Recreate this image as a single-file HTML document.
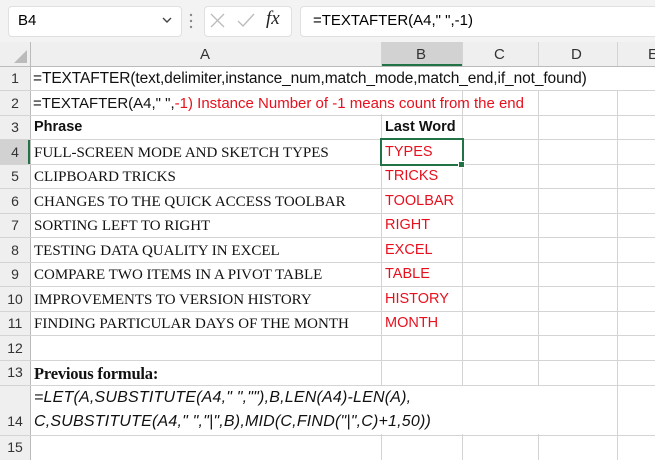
<!DOCTYPE html><html><head><style>
body{margin:0;width:655px;height:460px;overflow:hidden;background:#fff;font-family:"Liberation Sans",sans-serif;position:relative}
.a{position:absolute}
.hl{position:absolute;left:0;width:655px;height:1px;background:#d4d4d4}
.vl{position:absolute;top:42px;height:418px;width:1px;background:#d4d4d4}
.rn{position:absolute;left:0;width:30px;text-align:center;font-size:14px;color:#333;background:#efefef}
.t{position:absolute;left:34px;font-size:14.5px;white-space:nowrap;color:#111}
.s{font-family:"Liberation Serif",serif;font-size:15px;left:34px}
.r{color:#e8101e;left:385px}
</style></head><body>
<div class="a" style="left:0;top:0;width:655px;height:42px;background:#f3f3f3"></div>
<div class="a" style="left:8px;top:6px;width:172px;height:29px;background:#fff;border-radius:4px;border:1px solid #e0e0e0"></div>
<div class="a" style="left:18px;top:12px;font-size:15px">B4</div>
<svg class="a" style="left:161px;top:15px" width="12" height="10"><path d="M2 3L6 7L10 3" stroke="#444" stroke-width="1.4" fill="none"/></svg>
<svg class="a" style="left:188px;top:12px" width="6" height="18"><circle cx="3" cy="3" r="1.2" fill="#888"/><circle cx="3" cy="9" r="1.2" fill="#888"/><circle cx="3" cy="15" r="1.2" fill="#888"/></svg>
<div class="a" style="left:204px;top:6px;width:86px;height:29px;background:#fff;border-radius:4px;border:1px solid #e0e0e0"></div>
<svg class="a" style="left:208px;top:11px" width="52" height="22"><path d="M3 3L16 16M16 3L3 16" stroke="#bbb" stroke-width="1.3" fill="none"/><path d="M30 10L35 15L46 3" stroke="#bbb" stroke-width="1.3" fill="none"/></svg>
<div class="a" style="left:266px;top:8px;font-family:'Liberation Serif',serif;font-style:italic;font-size:19px;color:#222">fx</div>
<div class="a" style="left:300px;top:6px;width:360px;height:29px;background:#fff;border-radius:4px;border:1px solid #e0e0e0"></div>
<div class="a" style="left:313px;top:12px;font-size:15px">=TEXTAFTER(A4," ",-1)</div>
<div class="a" style="left:0;top:42px;width:655px;height:24px;background:#efefef"></div>
<div class="a" style="left:0;top:42px;width:30px;height:418px;background:#efefef"></div>
<svg class="a" style="left:12px;top:48px" width="16" height="16"><path d="M15 2L15 15L2 15Z" fill="#bbb"/></svg>
<div class="a" style="left:381px;top:42px;width:81px;height:24px;background:#d2d2d2;border-bottom:2px solid #217346;box-sizing:border-box"></div>
<div class="a" style="left:0;top:139px;width:30px;height:25px;background:#d2d2d2;border-right:2px solid #217346;box-sizing:border-box"></div>
<div class="a" style="left:200px;top:46px;font-size:15px;color:#333">A</div>
<div class="a" style="left:416px;top:46px;font-size:15px;color:#333">B</div>
<div class="a" style="left:494px;top:46px;font-size:15px;color:#333">C</div>
<div class="a" style="left:571px;top:46px;font-size:15px;color:#333">D</div>
<div class="a" style="left:648px;top:46px;font-size:15px;color:#333">E</div>
<div class="vl" style="left:30px;background:#bbb"></div><div class="vl" style="left:381px"></div><div class="vl" style="left:462px"></div><div class="vl" style="left:538px"></div><div class="vl" style="left:617px"></div>
<div class="hl" style="top:66px;background:#bbb"></div>
<div class="hl" style="top:90px"></div><div class="hl" style="top:115px"></div><div class="hl" style="top:139px"></div><div class="hl" style="top:164px"></div><div class="hl" style="top:188px"></div><div class="hl" style="top:213px"></div><div class="hl" style="top:237px"></div><div class="hl" style="top:262px"></div><div class="hl" style="top:286px"></div><div class="hl" style="top:311px"></div><div class="hl" style="top:335px"></div><div class="hl" style="top:360px"></div><div class="hl" style="top:385px"></div><div class="hl" style="top:435px"></div>
<div class="a" style="left:31px;top:67px;width:624px;height:23px;background:#fff"></div>
<div class="a" style="left:31px;top:91px;width:431px;height:23px;background:#fff"></div>
<div class="a" style="left:31px;top:386px;width:586px;height:48px;background:#fff"></div>
<div class="rn" style="top:70px">1</div><div class="rn" style="top:95px">2</div><div class="rn" style="top:119px">3</div><div class="rn" style="top:144px;background:none">4</div><div class="rn" style="top:168px">5</div><div class="rn" style="top:193px">6</div><div class="rn" style="top:217px">7</div><div class="rn" style="top:242px">8</div><div class="rn" style="top:266px">9</div><div class="rn" style="top:291px">10</div><div class="rn" style="top:315px">11</div><div class="rn" style="top:340px">12</div><div class="rn" style="top:364px">13</div><div class="rn" style="top:413px">14</div><div class="rn" style="top:439px">15</div>
<div class="t" style="top:70px;left:33px;font-size:15.5px;letter-spacing:-0.1px">=TEXTAFTER(text,delimiter,instance_num,match_mode,match_end,if_not_found)</div>
<div class="t" style="top:95px;left:33px;font-size:15px">=TEXTAFTER(A4," ",<span style="color:#e8101e">-1) Instance Number of -1 means count from the end</span></div>
<div class="t" style="top:119px;font-weight:bold">Phrase</div><div class="t" style="top:119px;left:385px;font-weight:bold">Last Word</div>
<div class="t s" style="top:145px">FULL-SCREEN MODE AND SKETCH TYPES</div>
<div class="t s" style="top:169px">CLIPBOARD TRICKS</div>
<div class="t s" style="top:194px">CHANGES TO THE QUICK ACCESS TOOLBAR</div>
<div class="t s" style="top:218px">SORTING LEFT TO RIGHT</div>
<div class="t s" style="top:243px">TESTING DATA QUALITY IN EXCEL</div>
<div class="t s" style="top:267px">COMPARE TWO ITEMS IN A PIVOT TABLE</div>
<div class="t s" style="top:292px">IMPROVEMENTS TO VERSION HISTORY</div>
<div class="t s" style="top:316px">FINDING PARTICULAR DAYS OF THE MONTH</div>
<div class="t r" style="top:144px">TYPES</div><div class="t r" style="top:168px">TRICKS</div><div class="t r" style="top:193px">TOOLBAR</div><div class="t r" style="top:217px">RIGHT</div><div class="t r" style="top:242px">EXCEL</div><div class="t r" style="top:266px">TABLE</div><div class="t r" style="top:291px">HISTORY</div><div class="t r" style="top:315px">MONTH</div>
<div class="a" style="left:380px;top:138px;width:80px;height:24px;border:2px solid #217346"></div>
<div class="a" style="left:458px;top:161px;width:5px;height:5px;background:#217346;border:1px solid #fff"></div>
<div class="t s" style="top:364px;font-size:16.5px;font-weight:bold;letter-spacing:-0.2px">Previous formula:</div>
<div class="t" style="top:389px;font-style:italic;font-size:16px;letter-spacing:0.2px">=LET(A,SUBSTITUTE(A4," ",""),B,LEN(A4)-LEN(A),</div>
<div class="t" style="top:413px;font-style:italic;font-size:16px;letter-spacing:0.2px">C,SUBSTITUTE(A4," ","|",B),MID(C,FIND("|",C)+1,50))</div>
</body></html>
